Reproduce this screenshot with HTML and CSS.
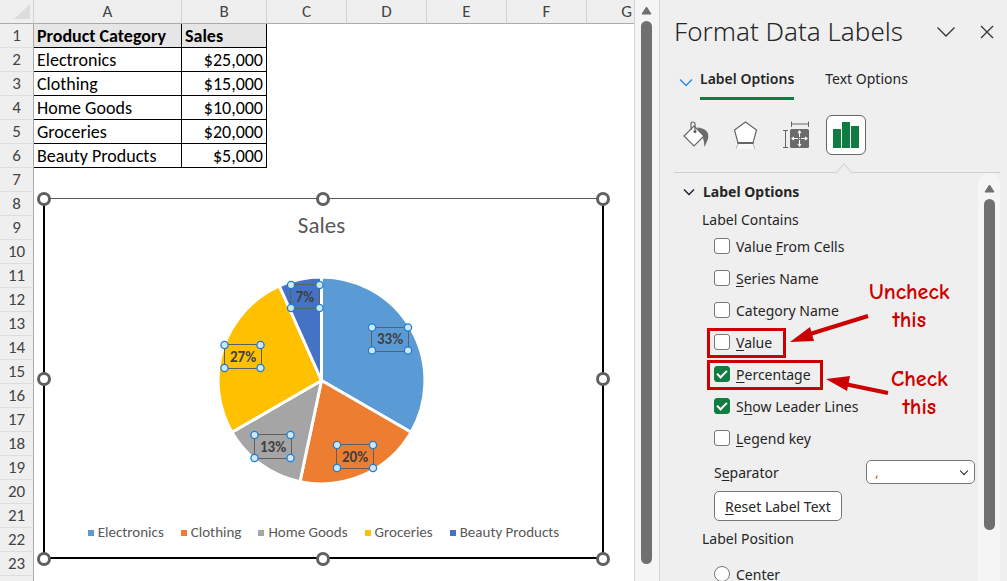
FILE: index.html
```html
<!DOCTYPE html>
<html lang="en">
<head>
<meta charset="utf-8">
<title>Format Data Labels</title>
<link rel="stylesheet" href="styles.css">
</head>
<body>
<div class="app">
  <main class="sheet">
    <table class="grid">
      <colgroup><col class="c-num"><col class="c-a"><col class="c-b"><col class="c-std"><col class="c-std"><col class="c-std"><col class="c-std"><col class="c-std"></colgroup>
      <thead><tr><th class="corner"><svg width="16" height="15" viewBox="0 0 16 15"><path d="M16 0V15H0z" fill="#dcdcdc"/></svg></th><th>A</th><th>B</th><th>C</th><th>D</th><th>E</th><th>F</th><th>G</th></tr></thead>
      <tbody>
        <tr><th>1</th><td class="cell head">Product Category</td><td class="cell head">Sales</td></tr>
        <tr><th>2</th><td class="cell">Electronics</td><td class="cell num">$25,000</td></tr>
        <tr><th>3</th><td class="cell">Clothing</td><td class="cell num">$15,000</td></tr>
        <tr><th>4</th><td class="cell">Home Goods</td><td class="cell num">$10,000</td></tr>
        <tr><th>5</th><td class="cell">Groceries</td><td class="cell num">$20,000</td></tr>
        <tr><th>6</th><td class="cell">Beauty Products</td><td class="cell num">$5,000</td></tr>
        <tr><th>7</th></tr><tr><th>8</th></tr><tr><th>9</th></tr><tr><th>10</th></tr><tr><th>11</th></tr><tr><th>12</th></tr>
        <tr><th>13</th></tr><tr><th>14</th></tr><tr><th>15</th></tr><tr><th>16</th></tr><tr><th>17</th></tr><tr><th>18</th></tr>
        <tr><th>19</th></tr><tr><th>20</th></tr><tr><th>21</th></tr><tr><th>22</th></tr><tr><th>23</th></tr><tr><th></th></tr>
      </tbody>
    </table>

    <section class="chart">
      <h2 class="chart-title">Sales</h2>
      <svg class="pie" width="240" height="220" viewBox="1 0 240 220">
        <g stroke="#fff" stroke-width="3" stroke-linejoin="round">
          <path fill="#5b9bd5" d="M118.500 110.500V7A103.500 103.500 0 0 1 208.100 162.200z"/>
          <path fill="#ed7d31" d="M118.500 110.500L208.100 162.200A103.500 103.500 0 0 1 97 211.700z"/>
          <path fill="#a5a5a5" d="M118.500 110.500L97 211.700A103.500 103.500 0 0 1 28.900 162.200z"/>
          <path fill="#ffc000" d="M118.500 110.500L28.900 162.200A103.500 103.500 0 0 1 76.400 16z"/>
          <path fill="#4472c4" d="M118.500 110.500L76.400 16A103.500 103.500 0 0 1 118.500 7z"/>
        </g>
        <g fill="none" stroke="#5f5f5f">
          <rect x="168.500" y="57.500" width="37" height="24"/>
          <rect x="133.500" y="174.500" width="37" height="24"/>
          <rect x="51.500" y="164.500" width="37" height="24"/>
          <rect x="21.500" y="74.500" width="37" height="24"/>
          <rect x="87.500" y="14.500" width="29" height="24"/>
        </g>
        <g fill="#d3e6f7" stroke="#1b7fd4" stroke-width="1.300">
          <circle cx="169" cy="57.500" r="3.600"/><circle cx="205" cy="57.500" r="3.600"/><circle cx="169" cy="80.500" r="3.600"/><circle cx="205" cy="80.500" r="3.600"/>
          <circle cx="134" cy="175" r="3.600"/><circle cx="170" cy="175" r="3.600"/><circle cx="134" cy="198" r="3.600"/><circle cx="170" cy="198" r="3.600"/>
          <circle cx="51.500" cy="165" r="3.600"/><circle cx="87.500" cy="165" r="3.600"/><circle cx="51.500" cy="188" r="3.600"/><circle cx="87.500" cy="188" r="3.600"/>
          <circle cx="21.500" cy="75" r="3.600"/><circle cx="57.500" cy="75" r="3.600"/><circle cx="21.500" cy="98" r="3.600"/><circle cx="57.500" cy="98" r="3.600"/>
          <circle cx="88" cy="15" r="3.600"/><circle cx="116.500" cy="15" r="3.600"/><circle cx="88" cy="38" r="3.600"/><circle cx="116.500" cy="38" r="3.600"/>
        </g>
        <g class="pie-label">
          <text x="187" y="74">33%</text><text x="152" y="192">20%</text><text x="70" y="182">13%</text><text x="40" y="92">27%</text><text x="102" y="32">7%</text>
        </g>
      </svg>
      <ul class="legend">
        <li class="k1">Electronics</li><li class="k2">Clothing</li><li class="k3">Home Goods</li><li class="k4">Groceries</li><li class="k5">Beauty Products</li>
      </ul>
      <i class="knob top left"></i><i class="knob top mid"></i><i class="knob top right"></i>
      <i class="knob center left"></i><i class="knob center right"></i>
      <i class="knob bottom left"></i><i class="knob bottom mid"></i><i class="knob bottom right"></i>
    </section>
  </main>

  <div class="scrollbar sheet-scroll">
    <svg width="11" height="9" viewBox="0 0 11 9"><path d="M5.500 1L10 8H1z" fill="#6f6f6f" stroke="#6f6f6f" stroke-linejoin="round"/></svg>
    <div class="thumb"></div>
  </div>

  <aside class="pane">
    <header class="pane-head">
      <h1>Format Data Labels</h1>
      <button class="plain" aria-label="Pane options"><svg width="20" height="12" viewBox="0 0 20 12"><path d="M1.500 1.500L10 10L18.500 1.500" fill="none" stroke="#333" stroke-width="1.300"/></svg></button>
      <button class="plain close" aria-label="Close"><svg width="14" height="14" viewBox="0 0 14 14"><path d="M1 1L13 13M13 1L1 13" fill="none" stroke="#333" stroke-width="1.300"/></svg></button>
    </header>
    <nav class="tabs">
      <svg width="14" height="9" viewBox="0 0 14 9"><path d="M1 1.500L7 7.500L13 1.500" fill="none" stroke="#2b8fe0" stroke-width="1.500"/></svg>
      <button class="tab active">Label Options</button>
      <button class="tab">Text Options</button>
    </nav>
    <div class="tools">
      <button class="tool" aria-label="Fill and line"><svg width="28" height="28" viewBox="0 0 28 28"><path d="M15 6.500C22 7 28 10 26 18L22.500 26C22 21 22 19 20 15z" fill="#6b6b6b"/><path d="M12 5L22 15L12 25L2 15z" fill="#fff" stroke="#666" stroke-width="1.200"/><path d="M9 9V3Q9 1 11 1Q13 1 13 3V9" fill="none" stroke="#666" stroke-width="1.200"/><circle cx="13" cy="10.500" r="1.500" fill="#555"/></svg></button>
      <button class="tool" aria-label="Effects"><svg width="26" height="28" viewBox="0 0 26 28"><path d="M5 23L3 28M20 23L22 28" stroke="#bbb"/><path d="M6 23H19L21 28H4z" fill="#f8f8f8"/><path d="M12.500 1L23.500 9L20 22H5L1.500 9z" fill="#fff" stroke="#666" stroke-width="1.200"/><path d="M4.500 22H20.500" stroke="#666" stroke-width="2"/></svg></button>
      <button class="tool" aria-label="Size and properties"><svg width="28" height="28" viewBox="0 0 28 28"><path d="M9.500 .5V6M26.500 .5V6M9.500 3H26.500M1 9.500H6M1 26.500H6M3.500 9.500V26.500" stroke="#666" fill="none"/><rect x="8" y="8" width="19" height="19" rx="1.500" fill="#6b6b6b"/><path d="M17.500 10V16M17.500 19V25M10 17.500H16M19 17.500H25M16 12L17.500 10L19 12M16 23L17.500 25L19 23M12 16L10 17.500L12 19M23 16L25 17.500L23 19M17 17.500H18" stroke="#fff" stroke-width="1.100" fill="none"/></svg></button>
      <button class="tool selected" aria-label="Label options"><svg width="26" height="26" viewBox="0 0 26 26"><path d="M0 7H8V26H0zM9 0H17V26H9zM18 4H26V26H18z" fill="#107c41"/></svg></button>
    </div>
    <div class="divider"><svg width="18" height="12" viewBox="0 0 18 12"><path d="M1 11.500L9 1.500L17 11.500" fill="#efefef" stroke="#cfcfcf"/></svg></div>
    <div class="body">
      <div class="options">
        <h2 class="group"><svg width="12" height="8" viewBox="0 0 12 8"><path d="M1 1.500L6 6.500L11 1.500" fill="none" stroke="#222" stroke-width="1.500"/></svg>Label Options</h2>
        <p class="sub">Label Contains</p>
        <div class="checks">
          <label><input type="checkbox"><span>Value <u>F</u>rom Cells</span></label>
          <label><input type="checkbox"><span><u>S</u>eries Name</span></label>
          <label><input type="checkbox"><span>Cate<u>g</u>ory Name</span></label>
          <label class="marked"><input type="checkbox"><span><u>V</u>alue</span></label>
          <label class="marked wide"><input type="checkbox" checked><span><u>P</u>ercentage</span></label>
          <label><input type="checkbox" checked><span>S<u>h</u>ow Leader Lines</span></label>
          <label><input type="checkbox"><span><u>L</u>egend key</span></label>
        </div>
        <div class="separator"><label for="sep">S<u>e</u>parator</label><select id="sep"><option>,</option></select></div>
        <button class="reset"><u>R</u>eset Label Text</button>
        <p class="sub">Label Position</p>
        <label class="radio"><input type="radio" name="pos"><span><u>C</u>enter</span></label>
      </div>
      <div class="scrollbar pane-scroll">
        <svg width="11" height="9" viewBox="0 0 11 9"><path d="M5.500 1L10 8H1z" fill="#6f6f6f" stroke="#6f6f6f" stroke-linejoin="round"/></svg>
        <div class="thumb"></div>
      </div>
    </div>
    <div class="note note-uncheck">Uncheck<br>this</div>
    <div class="note note-check">Check<br>this</div>
    <svg class="arrows" width="102" height="90" viewBox="0 0 102 90"><g stroke="#cc0000" stroke-width="4"><path d="M78 6L20 24M98 83L50 73"/></g><path d="M0 32L20 17L24 31zM36 69L60 66L57 81z" fill="#c00"/></svg>
  </aside>
</div>
</body>
</html>
```
FILE: styles.css
```css
* { box-sizing: border-box; }
body { margin: 0; background: #efefef; color: #262626; font: 14px/20px "Segoe UI", "Noto Sans", sans-serif; }
h1, h2, p, ul { margin: 0; padding: 0; }
button { font: inherit; color: inherit; }
u { text-underline-offset: 2px; }
.app { display: flex; height: 100vh; overflow: hidden; }

.sheet { position: relative; flex: 1; min-width: 0; overflow: hidden; background: #fff; font-family: Calibri, Carlito, Lato, sans-serif; }
.grid { width: 667px; table-layout: fixed; border-collapse: separate; border-spacing: 0; font-size: 17px; line-height: 22px; }
.c-num { width: 34px; }
.c-a { width: 148px; }
.c-b { width: 85px; }
.c-std { width: 80px; }
.grid th { height: 24px; padding: 1px 0 0; background: #efefef; color: #444; font-weight: 400; text-align: center; border-right: 1px solid #aaa; border-bottom: 1px solid #ddd; }
.grid thead th { border-right-color: #d4d4d4; border-bottom-color: #aaa; }
.grid .corner { text-align: right; padding: 0 3px 0 0; }
.corner svg { display: block; margin-left: auto; }
.cell { height: 24px; padding: 1px 3px 0; border-right: 1px solid #000; border-bottom: 1px solid #000; color: #000; line-height: 22px; font-size: 18px; white-space: nowrap; }
.head { background: #e7e6e6; font-weight: 700; }
.num { text-align: right; }

.chart { position: absolute; left: 43px; top: 198px; width: 561px; height: 361px; display: flex; flex-direction: column; align-items: center; background: #fff; border: 2px solid #000; border-top: 1px solid #595959; color: #595959; }
.chart-title { margin-top: 11px; padding-right: 4px; font-size: 23px; line-height: 30px; font-weight: 400; }
.pie { margin-top: 30px; }
.pie-label { font-size: 15px; font-weight: 700; fill: #404040; text-anchor: middle; }
.legend { display: flex; gap: 17px; margin-top: 32px; list-style: none; font-size: 15px; line-height: 20px; white-space: nowrap; }
.legend li { display: flex; align-items: center; gap: 4px; }
.legend li::before { content: ""; width: 6px; height: 6px; margin-top: 2px; background: currentColor; }
.k1::before { color: #5b9bd5; }
.k2::before { color: #ed7d31; }
.k3::before { color: #a5a5a5; }
.k4::before { color: #ffc000; }
.k5::before { color: #4472c4; }
.knob { position: absolute; width: 14px; height: 14px; border: 3px solid #606060; border-radius: 50%; background: #fff; }
.top { top: -7px; }
.center { top: 173px; }
.bottom { bottom: -9px; }
.left { left: -8px; }
.mid { left: 271px; }
.right { right: -8px; }

.scrollbar { display: flex; flex-direction: column; align-items: center; background: #f5f5f5; }
.thumb { width: 11px; border-radius: 6px; background: #707070; }
.sheet-scroll { width: 26px; padding: 6px 2px 0 0; border-left: 1px solid #d4d4d4; border-right: 1px solid #d4d4d4; gap: 6px; }
.sheet-scroll .thumb { flex: 1; margin-bottom: 17px; }

.pane { position: relative; width: 347px; padding: 0 7px 0 14px; display: flex; flex-direction: column; }
.pane-head { display: flex; align-items: center; height: 64px; }
.pane-head h1 { flex: 1; padding-bottom: 2px; font-size: 26px; line-height: 36px; font-weight: 300; white-space: nowrap; }
.plain { display: flex; padding: 0; border: 0; background: none; }
.close { margin: 0 6px 0 24px; }
.tabs { display: flex; align-items: center; height: 36px; padding-left: 5px; }
.tab { height: 36px; margin: 0 0 0 7px; padding: 0 0 4px; border: 0; border-bottom: 3px solid transparent; background: none; white-space: nowrap; }
.active { font-weight: 600; border-bottom-color: #107c41; margin-right: 24px; }
.tools { display: flex; gap: 10px; padding: 15px 0 0 2px; }
.tool { display: flex; align-items: center; justify-content: center; width: 40px; height: 40px; padding: 0; border: 0; background: none; }
.selected { border: 1px solid #666; border-radius: 6px; background: #fff; }
.divider { height: 18px; padding-left: 161px; border-bottom: 1px solid #cfcfcf; }
.divider svg { display: block; margin-top: 7px; }
.body { display: flex; flex: 1; min-height: 0; }
.options { flex: 1; padding: 9px 3px 0 0; }
.group { display: flex; align-items: center; gap: 8px; padding-left: 9px; font-size: 14px; line-height: 20px; font-weight: 700; }
.sub { padding: 8px 0 0 28px; }
.checks { display: flex; flex-direction: column; align-items: flex-start; gap: 2px; padding: 2px 0 0 33px; }
.checks label, .radio { display: flex; align-items: center; gap: 6px; height: 30px; padding: 0 14px 0 7px; white-space: nowrap; }
.checks .marked { height: 30px; padding-left: 4px; padding-right: 11px; border: 3px solid #c00; }
.checks .wide { padding-right: 9px; }
input { appearance: none; width: 16px; height: 16px; margin: 0 0 2px; border: 1px solid #777; border-radius: 3px; background: #fff; }
input:checked { border-color: #107c41; background: #107c41; display: grid; place-items: center; }
input:checked::before { content: ""; width: 8px; height: 4px; margin-bottom: 3px; border: solid #fff; border-width: 0 0 2px 2px; transform: rotate(-45deg); }
input[type="radio"] { border-radius: 50%; }
.separator { position: relative; display: flex; align-items: center; justify-content: space-between; height: 24px; margin-top: 6px; padding-left: 40px; }
.separator label { padding-top: 2px; }
.separator::after { content: ""; position: absolute; right: 8px; top: 8px; width: 5px; height: 5px; border: solid #222; border-width: 0 1px 1px 0; transform: rotate(45deg); }
select { width: 109px; height: 24px; appearance: none; padding: 0 8px; border: 1px solid #777; border-radius: 5px; color: #b06a20; font: inherit; background: #fff; }
.reset { display: block; height: 30px; margin: 7px 0 0 40px; padding: 2px 10px 0; border: 1px solid #777; border-radius: 5px; background: #fff; white-space: nowrap; }
.radio { margin: 11px 0 0 33px; }
.pane-scroll { width: 22px; padding-top: 11px; gap: 6px; border-radius: 11px 11px 0 0; }
.pane-scroll .thumb { flex: 1; margin-bottom: 51px; }
.note { position: absolute; color: #c00; font: 700 22px/28px "Comic Sans MS", "Comic Neue", Lato, sans-serif; text-align: center; }
.note-uncheck { left: 209px; top: 278px; }
.note-check { left: 231px; top: 365px; }
.arrows { position: absolute; left: 130px; top: 310px; }
```
